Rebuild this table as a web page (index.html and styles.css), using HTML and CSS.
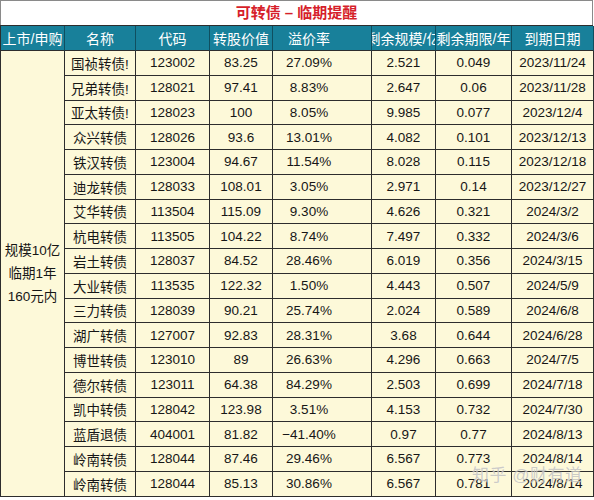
FILE: index.html
```html
<!DOCTYPE html>
<html lang="zh-CN">
<head>
<meta charset="utf-8">
<link rel="stylesheet" href="styles.css">
</head>
<body>
<div class="sheet">
  <div class="title">可转债 – 临期提醒</div>
  <div class="grid">
    <div class="th">上市/申购</div>
    <div class="th">名称</div>
    <div class="th">代码</div>
    <div class="th">转股价值</div>
    <div class="th th-prem">溢价率</div>
    <div class="th">剩余规模/亿</div>
    <div class="th">剩余期限/年</div>
    <div class="th">到期日期</div>

    <div class="merged">规模10亿<br>临期1年<br>160元内</div>

    <div class="td">国祯转债!</div><div class="td">123002</div><div class="td">83.25</div><div class="td">27.09%</div><div class="td">2.521</div><div class="td">0.049</div><div class="td">2023/11/24</div>
    <div class="td">兄弟转债!</div><div class="td">128021</div><div class="td">97.41</div><div class="td">8.83%</div><div class="td">2.647</div><div class="td">0.06</div><div class="td">2023/11/28</div>
    <div class="td">亚太转债!</div><div class="td">128023</div><div class="td">100</div><div class="td">8.05%</div><div class="td">9.985</div><div class="td">0.077</div><div class="td">2023/12/4</div>
    <div class="td">众兴转债</div><div class="td">128026</div><div class="td">93.6</div><div class="td">13.01%</div><div class="td">4.082</div><div class="td">0.101</div><div class="td">2023/12/13</div>
    <div class="td">铁汉转债</div><div class="td">123004</div><div class="td">94.67</div><div class="td">11.54%</div><div class="td">8.028</div><div class="td">0.115</div><div class="td">2023/12/18</div>
    <div class="td">迪龙转债</div><div class="td">128033</div><div class="td">108.01</div><div class="td">3.05%</div><div class="td">2.971</div><div class="td">0.14</div><div class="td">2023/12/27</div>
    <div class="td">艾华转债</div><div class="td">113504</div><div class="td">115.09</div><div class="td">9.30%</div><div class="td">4.626</div><div class="td">0.321</div><div class="td">2024/3/2</div>
    <div class="td">杭电转债</div><div class="td">113505</div><div class="td">104.22</div><div class="td">8.74%</div><div class="td">7.497</div><div class="td">0.332</div><div class="td">2024/3/6</div>
    <div class="td">岩土转债</div><div class="td">128037</div><div class="td">84.52</div><div class="td">28.46%</div><div class="td">6.019</div><div class="td">0.356</div><div class="td">2024/3/15</div>
    <div class="td">大业转债</div><div class="td">113535</div><div class="td">122.32</div><div class="td">1.50%</div><div class="td">4.443</div><div class="td">0.507</div><div class="td">2024/5/9</div>
    <div class="td">三力转债</div><div class="td">128039</div><div class="td">90.21</div><div class="td">25.74%</div><div class="td">2.024</div><div class="td">0.589</div><div class="td">2024/6/8</div>
    <div class="td">湖广转债</div><div class="td">127007</div><div class="td">92.83</div><div class="td">28.31%</div><div class="td">3.68</div><div class="td">0.644</div><div class="td">2024/6/28</div>
    <div class="td">博世转债</div><div class="td">123010</div><div class="td">89</div><div class="td">26.63%</div><div class="td">4.296</div><div class="td">0.663</div><div class="td">2024/7/5</div>
    <div class="td">德尔转债</div><div class="td">123011</div><div class="td">64.38</div><div class="td">84.29%</div><div class="td">2.503</div><div class="td">0.699</div><div class="td">2024/7/18</div>
    <div class="td">凯中转债</div><div class="td">128042</div><div class="td">123.98</div><div class="td">3.51%</div><div class="td">4.153</div><div class="td">0.732</div><div class="td">2024/7/30</div>
    <div class="td">蓝盾退债</div><div class="td">404001</div><div class="td">81.82</div><div class="td">−41.40%</div><div class="td">0.97</div><div class="td">0.77</div><div class="td">2024/8/13</div>
    <div class="td">岭南转债</div><div class="td">128044</div><div class="td">87.46</div><div class="td">29.46%</div><div class="td">6.567</div><div class="td">0.773</div><div class="td">2024/8/14</div>
    <div class="td">岭南转债</div><div class="td">128044</div><div class="td">85.13</div><div class="td">30.86%</div><div class="td">6.567</div><div class="td">0.781</div><div class="td">2024/8/14</div>
  </div>
  <div class="watermark">知乎 @财有道</div>
</div>
</body>
</html>
```

FILE: styles.css
```css
* { box-sizing: border-box; }
html, body { margin: 0; padding: 0; background: #ffffff; }
body {
  font-family: "Liberation Sans", "Noto Sans CJK SC", sans-serif;
  color: #161616;
}
.sheet {
  position: relative;
  width: 594px;
  height: 500px;
  overflow: hidden;
}
.title {
  height: 25px;
  width: 593px;
  border: 1px solid #8a8a8a;
  border-bottom: none;
  background: #ffffff;
  color: #d61f2b;
  font-weight: 700;
  font-size: 15px;
  line-height: 23px;
  text-align: center;
}
.grid {
  display: grid;
  width: 593px;
  grid-template-columns: 64px 71px 74px 63px 99px 64px 76px 82px;
  grid-template-rows: 25px repeat(18, 24.75px);
  border-top: 1px solid #2d2d2d;
  border-left: 1px solid #2d2d2d;
}
.th, .td, .merged {
  border-right: 1px solid #2d2d2d;
  border-bottom: 1px solid #2d2d2d;
  overflow: hidden;
  white-space: nowrap;
  display: flex;
  align-items: center;
  justify-content: center;
}
.th {
  background: #18809a;
  color: #ffffff;
  font-size: 14px;
  border-right-color: #0f4f60;
}
.td {
  background: #fdf9d9;
  font-size: 13.5px;
}
.td:nth-child(7n+6),
.th-prem {
  padding-right: 26px;
}
.merged {
  grid-column: 1;
  grid-row: 2 / span 18;
  background: #fdf9d9;
  font-size: 13.5px;
  line-height: 23px;
  text-align: center;
  white-space: normal;
}
.watermark {
  position: absolute;
  left: 472px;
  top: 461px;
  font-size: 17px;
  color: rgba(160, 160, 160, 0.55);
  text-shadow: 0 0 1px rgba(255, 255, 255, 0.8);
  white-space: nowrap;
  letter-spacing: 0.5px;
}
```
